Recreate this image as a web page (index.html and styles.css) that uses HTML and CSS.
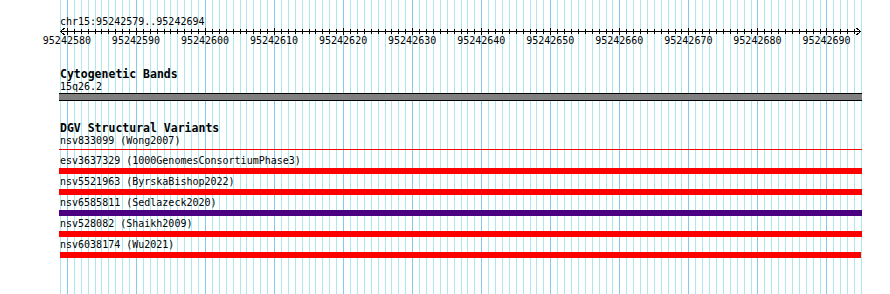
FILE: index.html
```html
<!DOCTYPE html>
<html lang="en">
<head>
<meta charset="utf-8">
<title>Genome browser</title>
<link rel="stylesheet" href="styles.css">
</head>
<body>
<div class="browser">
  <svg class="grid" id="grid" width="890" height="294" aria-hidden="true"></svg>
  <div class="tracks">
    <div class="locus">chr15:95242579..95242694</div>
    <svg class="ruler" id="ruler" width="801" height="20"></svg>

    <section class="track track-cyto">
      <h2 class="track-title">Cytogenetic Bands</h2>
      <div class="feature">
        <div class="feature-label label-band">15q26.2</div>
        <div class="band"></div>
      </div>
    </section>

    <section class="track track-dgv">
      <h2 class="track-title">DGV Structural Variants</h2>
      <div class="feature feature-thin">
        <div class="feature-label">nsv833099 (Wong2007)</div>
        <div class="thin-line"></div>
      </div>
      <div class="feature">
        <div class="feature-label">esv3637329 (1000GenomesConsortiumPhase3)</div>
        <div class="bar bar-red"></div>
      </div>
      <div class="feature">
        <div class="feature-label">nsv5521963 (ByrskaBishop2022)</div>
        <div class="bar bar-red"></div>
      </div>
      <div class="feature">
        <div class="feature-label">nsv6585811 (Sedlazeck2020)</div>
        <div class="bar bar-purple"></div>
      </div>
      <div class="feature">
        <div class="feature-label">nsv528082 (Shaikh2009)</div>
        <div class="bar bar-red"></div>
      </div>
      <div class="feature">
        <div class="feature-label">nsv6038174 (Wu2021)</div>
        <div class="bar bar-red bar-inset"></div>
      </div>
    </section>
  </div>
</div>
<script src="app.js"></script>
</body>
</html>
```

FILE: styles.css
```css
html, body {
  margin: 0;
  background: #fff;
}

body {
  font-family: "DejaVu Sans Mono", "Liberation Mono", monospace;
  color: #000;
}

.browser {
  position: relative;
  width: 890px;
  height: 294px;
  overflow: hidden;
}

.grid {
  position: absolute;
  left: 0;
  top: 0;
}

.grid-line {
  stroke: #aee8ef;
  stroke-width: 1;
  shape-rendering: crispEdges;
}

.grid-line.major {
  stroke: #86c7ec;
}

.tracks {
  position: relative;
  margin-left: 60px;
  width: 801px;
  padding-top: 16px;
}

.locus {
  font-size: 10px;
  line-height: 12px;
  height: 12px;
  white-space: nowrap;
}

.ruler {
  display: block;
  overflow: visible;
}

.ruler .axis,
.ruler .tick,
.ruler .arrow {
  stroke: #000;
  stroke-width: 1;
  fill: none;
  shape-rendering: crispEdges;
}

.ruler .tick-label {
  font-family: "DejaVu Sans Mono", "Liberation Mono", monospace;
  font-size: 10px;
  fill: #000;
}

.track-title {
  margin: 0;
  font-size: 11.5px;
  font-weight: bold;
  line-height: 12px;
  white-space: nowrap;
}

.track-cyto {
  margin-top: 20px;
}

.track-dgv {
  margin-top: 21px;
}

.feature-label {
  font-size: 10px;
  line-height: 14px;
  height: 14px;
  white-space: nowrap;
}

.feature-label.label-band {
  line-height: 13px;
  height: 13px;
}

.band {
  height: 6px;
  width: 803px;
  margin-left: -1px;
  background: #808080;
  border-top: 1px solid #000;
  border-bottom: 1px solid #000;
}

.thin-line {
  height: 1px;
  width: 803px;
  margin-left: -1px;
  margin-top: 1px;
  margin-bottom: 4px;
  background: #ff0000;
}

.bar {
  height: 6px;
  width: 803px;
  margin-left: -1px;
  margin-bottom: 1px;
}

.bar.bar-inset {
  width: 801px;
  margin-left: 0;
}

.bar-red {
  background: #ff0000;
}

.bar-purple {
  background: #4b0082;
}
```

FILE: app.js
```js
(function () {
  var NS = "http://www.w3.org/2000/svg";
  var BP0 = 95242579;
  var N = 116;
  var LEFT = 60;
  var WIDTH = 801;
  var step = WIDTH / N;

  function make(tag, attrs, cls) {
    var el = document.createElementNS(NS, tag);
    for (var k in attrs) el.setAttribute(k, attrs[k]);
    if (cls) el.setAttribute("class", cls);
    return el;
  }

  var grid = document.getElementById("grid");
  var ruler = document.getElementById("ruler");

  for (var i = 0; i <= N; i++) {
    var bp = BP0 + i;
    var major = bp % 10 === 0;
    var gx = Math.round(LEFT + i * step) + 0.5;
    grid.appendChild(make("line", { x1: gx, x2: gx, y1: 0, y2: 294 }, major ? "grid-line major" : "grid-line"));

    var rx = Math.round(i * step) + 0.5;
    if (major) {
      ruler.appendChild(make("line", { x1: rx, x2: rx, y1: 0, y2: 7 }, "tick"));
      var t = make("text", { x: (i * step).toFixed(2), y: 15.5, "text-anchor": "middle" }, "tick-label");
      t.textContent = String(bp);
      ruler.appendChild(t);
    } else if (i > 0 && i < N) {
      ruler.appendChild(make("line", { x1: rx, x2: rx, y1: 1, y2: 6 }, "tick"));
    }
  }

  ruler.appendChild(make("line", { x1: 0, x2: WIDTH, y1: 3.5, y2: 3.5 }, "axis"));
  ruler.appendChild(make("polyline", { points: "4.5,0 0.5,3.5 4.5,7" }, "arrow"));
  ruler.appendChild(make("polyline", { points: (WIDTH - 4.5) + ",0 " + (WIDTH - 0.5) + ",3.5 " + (WIDTH - 4.5) + ",7" }, "arrow"));
})();
```
